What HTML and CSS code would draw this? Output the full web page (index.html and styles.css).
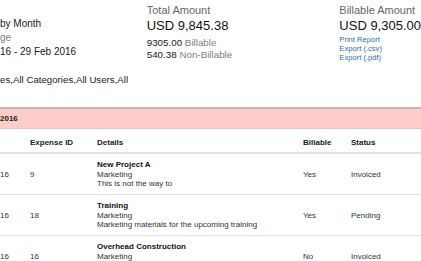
FILE: index.html
```html
<!DOCTYPE html>
<html lang="en">
<head>
    <meta charset="UTF-8">
    <meta name="viewport" content="width=device-width, initial-scale=1.0">
    <title>Expense Report</title>
    <link rel="stylesheet" href="styles.css">
</head>
<body>
    <div class="summary">
        <div class="report-info">
            <p class="info-line">by Month</p>
            <p class="info-line muted">ge</p>
            <p class="info-line">16 - 29 Feb 2016</p>
            <p class="filters">es,All Categories,All Users,All</p>
        </div>

        <div class="amount-box total">
            <p class="amount-label">Total Amount</p>
            <p class="amount-value">USD 9,845.38</p>
            <ul class="breakdown">
                <li>9305.00 <span class="muted">Billable</span></li>
                <li>540.38 <span class="muted">Non-Billable</span></li>
            </ul>
        </div>

        <div class="amount-box billable">
            <p class="amount-label">Billable Amount</p>
            <p class="amount-value">USD 9,305.00</p>
            <ul class="actions">
                <li><a href="#" id="print-link">Print Report</a></li>
                <li><a href="#" id="csv-link">Export (.csv)</a></li>
                <li><a href="#" id="pdf-link">Export (.pdf)</a></li>
            </ul>
        </div>
    </div>

    <div class="month-bar">2016</div>

    <table class="expense-table">
        <colgroup>
            <col class="col-date">
            <col class="col-id">
            <col class="col-details">
            <col class="col-billable">
            <col class="col-status">
        </colgroup>
        <thead>
            <tr>
                <th></th>
                <th>Expense ID</th>
                <th>Details</th>
                <th>Billable</th>
                <th>Status</th>
            </tr>
        </thead>
        <tbody>
            <tr>
                <td>16</td>
                <td>9</td>
                <td>
                    <div class="item-title">New Project A</div>
                    <div>Marketing</div>
                    <div>This is not the way to</div>
                </td>
                <td>Yes</td>
                <td>Invoiced</td>
            </tr>
            <tr>
                <td>16</td>
                <td>18</td>
                <td>
                    <div class="item-title">Training</div>
                    <div>Marketing</div>
                    <div>Marketing materials for the upcoming training</div>
                </td>
                <td>Yes</td>
                <td>Pending</td>
            </tr>
            <tr>
                <td>16</td>
                <td>16</td>
                <td>
                    <div class="item-title">Overhead Construction</div>
                    <div>Marketing</div>
                    <div>Site overhead costs</div>
                </td>
                <td>No</td>
                <td>Invoiced</td>
            </tr>
        </tbody>
    </table>
</body>
</html>
```

FILE: styles.css
```css
:root {
    --text-color: #1a1a1a;
    --muted-color: #808080;
    --link-color: #2b6cc4;
    --band-color: #ffcccc;
    --line-color: #e2e2e2;
}

* {
    margin: 0;
    padding: 0;
    box-sizing: border-box;
}

body {
    font-family: 'Liberation Sans', Arial, sans-serif;
    color: var(--text-color);
    background: #fff;
    width: 421px;
    overflow: hidden;
}

.muted {
    color: var(--muted-color);
}

/* top summary */
.summary {
    display: flex;
    height: 107px;
}

.report-info {
    width: 147px;
    padding-top: 17px;
    font-size: 10px;
}

.info-line {
    line-height: 14px;
}

.filters {
    margin-top: 14px;
    line-height: 14px;
    font-size: 9.7px;
    white-space: nowrap;
}

.amount-box {
    padding-top: 4px;
}

.total {
    width: 193px;
}

.billable {
    flex: 1;
    white-space: nowrap;
}

.amount-label {
    font-size: 11px;
    line-height: 13px;
    color: #666;
}

.amount-value {
    margin-top: 1px;
    font-size: 13px;
    line-height: 15px;
    color: #111;
}

.breakdown {
    list-style: none;
    margin-top: 4px;
    font-size: 9.8px;
    line-height: 12px;
}

.actions {
    list-style: none;
    margin-top: 1.5px;
    font-size: 7.6px;
    line-height: 9px;
}

.actions a {
    color: var(--link-color);
    text-decoration: none;
}

/* month band */
.month-bar {
    background-color: var(--band-color);
    border-top: 2px solid #c9b5b5;
    border-bottom: 1px solid #d8c4c4;
    height: 22px;
    line-height: 19px;
    font-size: 8px;
    font-weight: bold;
}

/* table */
.expense-table {
    width: 421px;
    table-layout: fixed;
    border-collapse: collapse;
    font-size: 8px;
}

.col-date { width: 30px; }
.col-id { width: 67px; }
.col-details { width: 206px; }
.col-billable { width: 48px; }
.col-status { width: 70px; }

.expense-table th {
    text-align: left;
    font-weight: bold;
    line-height: 10px;
    padding: 9px 0 4px;
    border-bottom: 2px solid var(--line-color);
}

.expense-table td {
    line-height: 9.5px;
    padding: 6px 0 5.5px;
    vertical-align: middle;
    color: #333;
    border-bottom: 1px solid var(--line-color);
}

.item-title {
    font-weight: bold;
    color: #111;
}
```
